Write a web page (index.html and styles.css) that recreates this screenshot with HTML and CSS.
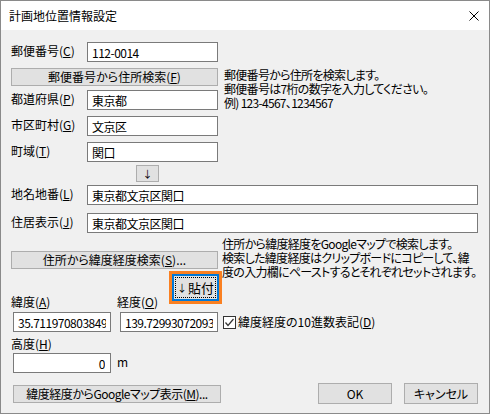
FILE: index.html
```html
<!DOCTYPE html>
<html lang="ja">
<head>
    <meta charset="UTF-8">
    <meta name="viewport" content="width=device-width, initial-scale=1.0">
    <title>計画地位置情報設定</title>
    <link rel="stylesheet" href="styles.css">
</head>
<body>
<div class="window">
    <div class="titlebar">
        <span class="title">計画地位置情報設定</span>
        <svg class="close" viewBox="0 0 10 10" aria-label="閉じる">
            <path d="M0.5 0.5 L9.5 9.5 M9.5 0.5 L0.5 9.5"/>
        </svg>
    </div>
    <div class="content">
        <div class="row">
            <span class="label">郵便番号(<u>C</u>)</span>
            <input class="input w-short" value="112-0014">
        </div>
        <div class="zip-block">
            <div class="zip-left">
                <button class="btn btn-wide">郵便番号から住所検索(<u>F</u>)</button>
                <div class="row">
                    <span class="label">都道府県(<u>P</u>)</span>
                    <input class="input w-short" value="東京都">
                </div>
                <div class="row">
                    <span class="label">市区町村(<u>G</u>)</span>
                    <input class="input w-short" value="文京区">
                </div>
                <div class="row">
                    <span class="label">町域(<u>T</u>)</span>
                    <input class="input w-short" value="関口">
                </div>
                <button class="btn btn-arrow">↓</button>
            </div>
            <p class="note">郵便番号から住所を検索します。<br>郵便番号は7桁の数字を入力してください。<br>例) 123-4567、1234567</p>
        </div>
        <div class="row row-long">
            <span class="label">地名地番(<u>L</u>)</span>
            <input class="input w-long" value="東京都文京区関口">
        </div>
        <div class="row row-long gap-8">
            <span class="label">住居表示(<u>J</u>)</span>
            <input class="input w-long" value="東京都文京区関口">
        </div>
        <div class="geo-block">
            <div class="geo-left">
                <button class="btn btn-wide">住所から緯度経度検索(<u>S</u>)...</button>
                <div class="coord-head">
                    <span class="label lat-label">緯度(<u>A</u>)</span>
                    <span class="label lon-label">経度(<u>O</u>)</span>
                    <div class="paste-ring">
                        <button class="btn btn-paste"><span class="focus"><span class="arrow">↓</span>貼付</span></button>
                    </div>
                </div>
            </div>
            <p class="note">住所から緯度経度をGoogleマップで検索します。<br>検索した緯度経度はクリップボードにコピーして、緯<br>度の入力欄にペーストするとそれぞれセットされます。</p>
        </div>
        <div class="coord-row">
            <input class="input w-coord lat" value="35.71197080384948">
            <input class="input w-coord lon" value="139.729930720932">
            <span class="check">
                <svg viewBox="0 0 13 13">
                    <rect x="0.5" y="0.5" width="12" height="12" fill="#fff" stroke="#333"/>
                    <path d="M2.5 6.5 L5 9.5 L10.5 3" fill="none" stroke="#333" stroke-width="1.2"/>
                </svg>
            </span>
            <span class="check-label">緯度経度の10進数表記(<u>D</u>)</span>
        </div>
        <div class="label alt-label">高度(<u>H</u>)</div>
        <div class="alt-row">
            <input class="input w-coord alt" value="0">
            <span class="unit">m</span>
        </div>
        <div class="footer">
            <button class="btn btn-map">緯度経度からGoogleマップ表示(<u>M</u>)...</button>
            <button class="btn btn-ok">OK</button>
            <button class="btn btn-cancel">キャンセル</button>
        </div>
    </div>
</div>
</body>
</html>
```

FILE: styles.css
```css
body {
    margin: 0;
    font-family: "Noto Sans CJK JP", sans-serif;
    font-size: 12px;
    line-height: 14px;
    color: #000;
    font-feature-settings: "palt";
}
.window {
    width: 490px;
    height: 414px;
    box-sizing: border-box;
    border: 1px solid #8a8a8a;
    background-color: #f0f0f0;
    display: flex;
    flex-direction: column;
}
.titlebar {
    height: 29px;
    flex: none;
    background-color: #fff;
    display: flex;
    align-items: center;
    justify-content: space-between;
    padding: 0 10px 0 8px;
}
.close {
    width: 10px;
    height: 10px;
    stroke: #000;
    stroke-width: 1;
}
.content {
    padding: 12px 11px 0 10px;
    display: flex;
    flex-direction: column;
}
.row {
    display: flex;
    align-items: center;
    height: 20px;
}
.label {
    width: 76px;
    flex: none;
    padding-bottom: 3px;
    white-space: nowrap;
}
.input {
    box-sizing: border-box;
    height: 20px;
    margin: 0;
    padding: 0 4px;
    border: 1px solid #7a7a7a;
    background-color: #fff;
    font: inherit;
    font-feature-settings: "palt";
    letter-spacing: -0.5px;
    color: #000;
    outline: none;
}
.w-short {
    width: 131px;
}
.w-long {
    flex: 1;
    min-width: 0;
}
.btn {
    box-sizing: border-box;
    margin: 0;
    padding: 0;
    border: 1px solid #adadad;
    background-color: #e1e1e1;
    font: inherit;
    font-feature-settings: "palt";
    color: #000;
    line-height: 14px;
}
.btn-wide {
    width: 207px;
    height: 18px;
}
.zip-block {
    display: flex;
    align-items: flex-start;
    margin-top: 6px;
}
.zip-left {
    width: 207px;
    display: flex;
    flex-direction: column;
}
.zip-left .row {
    margin-top: 6px;
}
.zip-left .btn-wide + .row {
    margin-top: 4px;
}
.btn-arrow {
    width: 23px;
    height: 17px;
    margin: 3px 0 0 125px;
    font-size: 10px;
}
.note {
    margin: 0 0 0 6px;
    white-space: nowrap;
    letter-spacing: -0.7px;
}
.row-long {
    margin-top: 3px;
}
.gap-8 {
    margin-top: 8px;
}
.geo-block {
    display: flex;
    align-items: flex-start;
    margin-top: 4px;
}
.geo-left {
    width: 211px;
    flex: none;
    padding-top: 14px;
}
.geo-block .note {
    margin-left: 0;
}
.coord-head {
    display: flex;
    height: 37px;
    margin-top: 2px;
}
.lat-label, .lon-label {
    align-self: flex-end;
    line-height: 12px;
    padding-bottom: 0;
}
.lat-label {
    width: 106px;
}
.lon-label {
    width: 52px;
}
.paste-ring {
    box-sizing: border-box;
    width: 53px;
    height: 33px;
    border: 3px solid #fa8021;
}
.btn-paste {
    display: block;
    width: 100%;
    height: 100%;
    border: 2px solid #0078d7;
    padding: 1px;
}
.focus {
    display: flex;
    align-items: center;
    justify-content: center;
    height: 100%;
    outline: 1px dotted #000;
    outline-offset: -1px;
    font-size: 13px;
}
.arrow {
    font-size: 10px;
    margin-right: 1px;
}
.coord-row {
    display: flex;
    align-items: center;
    margin-top: 4px;
    height: 20px;
}
.w-coord {
    width: 98px;
}
.lat {
    margin-left: 2px;
}
.lon {
    margin-left: 9px;
}
.check {
    margin-left: 5px;
    width: 13px;
    height: 13px;
}
.check svg {
    display: block;
    width: 13px;
    height: 13px;
}
.check-label {
    margin-left: 2px;
    white-space: nowrap;
}
.alt-label {
    margin-top: 5px;
    padding-bottom: 0;
}
.alt-row {
    display: flex;
    align-items: center;
    margin-top: 2px;
}
.alt {
    margin-left: 2px;
    text-align: right;
    padding-right: 5px;
}
.unit {
    margin-left: 6px;
    padding-bottom: 2px;
}
.footer {
    display: flex;
    align-items: center;
    height: 21px;
    margin-top: 10px;
}
.btn-map {
    width: 208px;
    height: 18px;
    margin-left: 2px;
    letter-spacing: -0.5px;
}
.btn-ok, .btn-cancel {
    width: 74px;
    height: 21px;
}
.btn-ok {
    margin-left: auto;
}
.btn-cancel {
    margin-left: 12px;
}
```
